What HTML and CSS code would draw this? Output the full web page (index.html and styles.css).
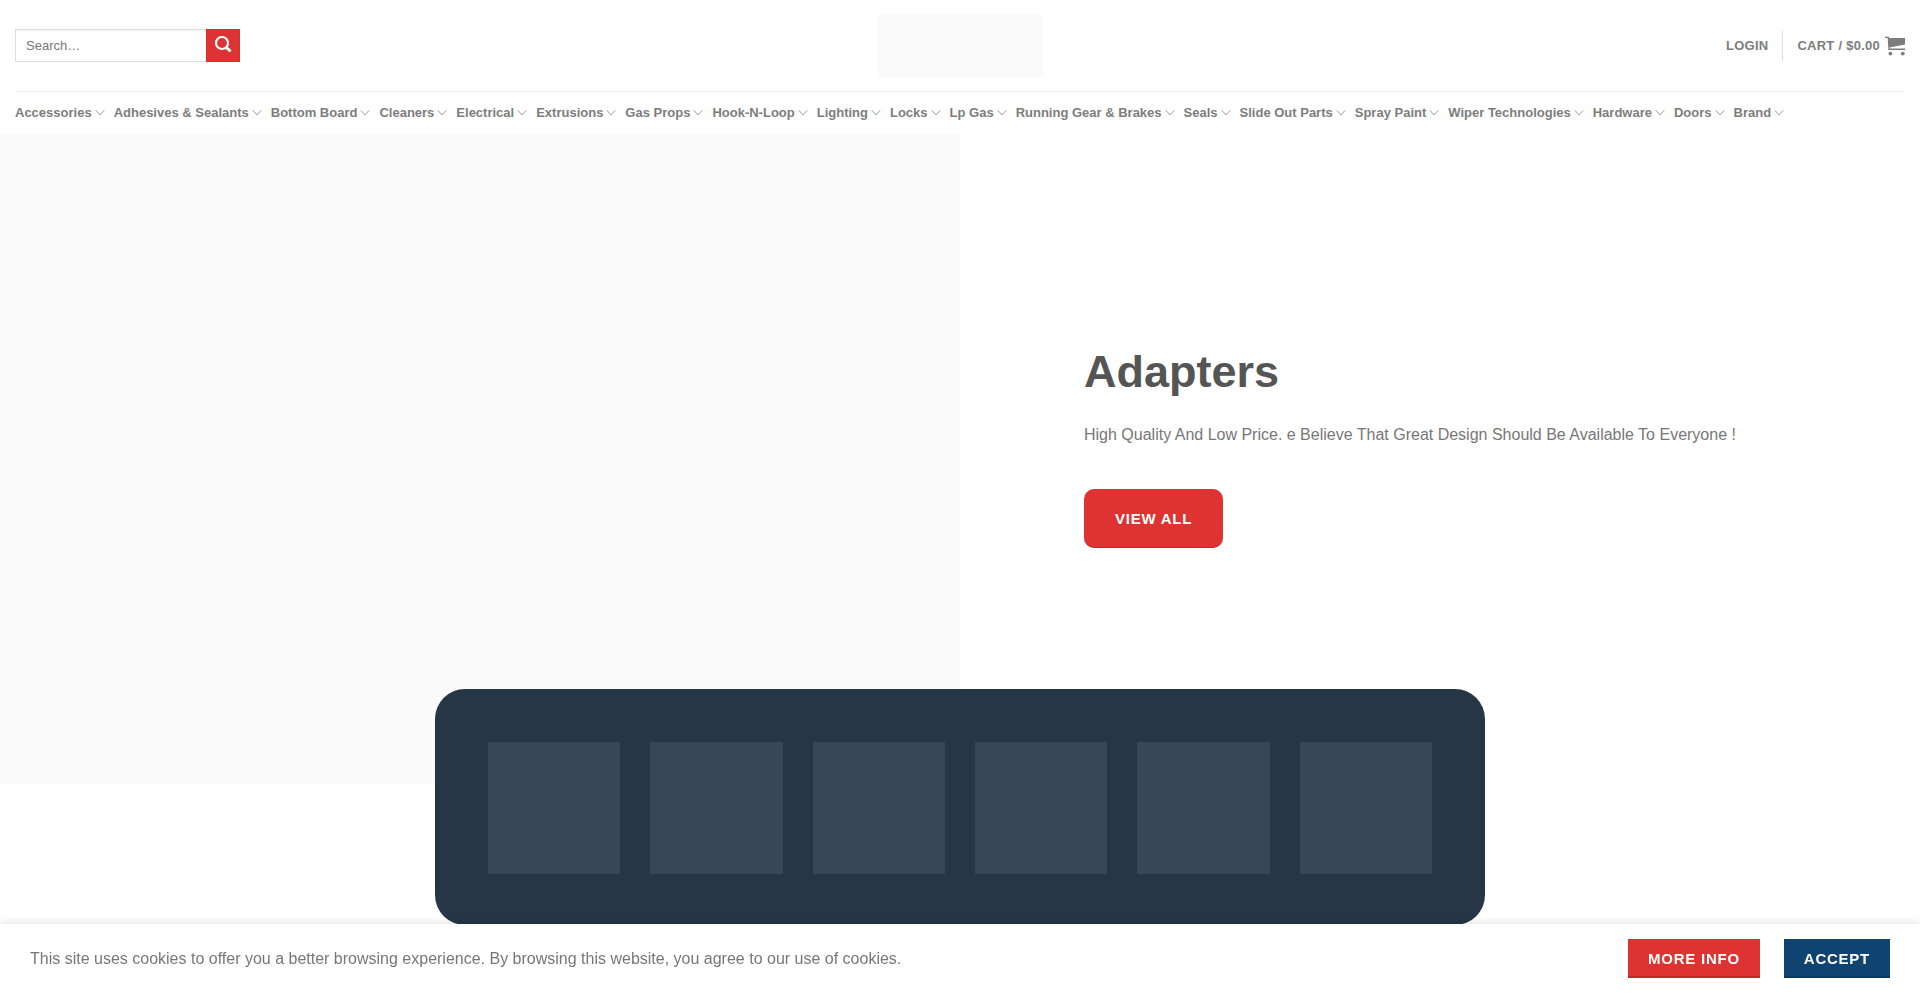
FILE: index.html
```html
<!DOCTYPE html>
<html lang="en">

<head>
    <meta charset="UTF-8">
    <meta name="viewport" content="width=device-width, initial-scale=1.0">
    <title>Adapters</title>
    <link rel="stylesheet" href="styles.css">
</head>

<body>
    <svg width="0" height="0" class="sprite" aria-hidden="true">
        <symbol id="chevron" viewBox="0 0 10 10">
            <path d="M0.8 2.3 L5 6.9 L9.2 2.3" fill="none" stroke="currentColor" stroke-width="1" />
        </symbol>
    </svg>

    <header class="header">
        <div class="header-main">
            <form class="search-form">
                <input type="search" class="search-field" placeholder="Search…" aria-label="Search">
                <button type="button" class="search-button" aria-label="Submit search">
                    <svg width="17" height="17" viewBox="0 0 17 17">
                        <circle cx="7" cy="7" r="6" fill="none" stroke="#fff" stroke-width="2.2" />
                        <path d="M11 11.2 L15.6 15.4" stroke="#fff" stroke-width="2.8" />
                    </svg>
                </button>
            </form>

            <a href="#" class="logo" aria-label="Home"></a>

            <div class="account">
                <a href="#" class="account-link">Login</a>
                <span class="divider"></span>
                <a href="#" class="account-link cart-link">
                    Cart / $0.00
                    <svg width="20" height="20" viewBox="0 0 20 20" fill="currentColor">
                        <path d="M0 0.8 H3.9 L4.3 2 H20 V8.6 L4.6 11.4 V12.6 H20 V14 H3.3 V11.4 L2.7 2 H0 Z" />
                        <circle cx="5.4" cy="17.6" r="1.9" />
                        <circle cx="17.8" cy="17.6" r="1.9" />
                    </svg>
                </a>
            </div>
        </div>

        <nav class="nav">
            <a href="#">Accessories <svg class="chevron"><use href="#chevron" /></svg></a>
            <a href="#">Adhesives &amp; Sealants <svg class="chevron"><use href="#chevron" /></svg></a>
            <a href="#">Bottom Board <svg class="chevron"><use href="#chevron" /></svg></a>
            <a href="#">Cleaners <svg class="chevron"><use href="#chevron" /></svg></a>
            <a href="#">Electrical <svg class="chevron"><use href="#chevron" /></svg></a>
            <a href="#">Extrusions <svg class="chevron"><use href="#chevron" /></svg></a>
            <a href="#">Gas Props <svg class="chevron"><use href="#chevron" /></svg></a>
            <a href="#">Hook-N-Loop <svg class="chevron"><use href="#chevron" /></svg></a>
            <a href="#">Lighting <svg class="chevron"><use href="#chevron" /></svg></a>
            <a href="#">Locks <svg class="chevron"><use href="#chevron" /></svg></a>
            <a href="#">Lp Gas <svg class="chevron"><use href="#chevron" /></svg></a>
            <a href="#">Running Gear &amp; Brakes <svg class="chevron"><use href="#chevron" /></svg></a>
            <a href="#">Seals <svg class="chevron"><use href="#chevron" /></svg></a>
            <a href="#">Slide Out Parts <svg class="chevron"><use href="#chevron" /></svg></a>
            <a href="#">Spray Paint <svg class="chevron"><use href="#chevron" /></svg></a>
            <a href="#">Wiper Technologies <svg class="chevron"><use href="#chevron" /></svg></a>
            <a href="#">Hardware <svg class="chevron"><use href="#chevron" /></svg></a>
            <a href="#">Doors <svg class="chevron"><use href="#chevron" /></svg></a>
            <a href="#">Brand <svg class="chevron"><use href="#chevron" /></svg></a>
        </nav>
    </header>

    <main>
        <section class="hero">
            <div class="hero-image"></div>
            <div class="hero-text">
                <h1>Adapters</h1>
                <p>High Quality And Low Price. e Believe That Great Design Should Be Available To Everyone !</p>
                <a href="#" class="button view-all">View all</a>
            </div>
        </section>

        <section class="brands">
            <div class="brand"></div>
            <div class="brand"></div>
            <div class="brand"></div>
            <div class="brand"></div>
            <div class="brand"></div>
            <div class="brand"></div>
        </section>
    </main>

    <div class="cookies">
        <p>This site uses cookies to offer you a better browsing experience. By browsing this website, you agree to our use of cookies.</p>
        <div class="cookies-buttons">
            <a href="#" class="button">More info</a>
            <button type="button" class="button accept">Accept</button>
        </div>
    </div>
</body>

</html>
```
FILE: styles.css
```css
* {
    box-sizing: border-box;
}

body {
    margin: 0;
    background-color: #fff;
    color: #777;
    font-family: "Liberation Sans", Arial, sans-serif;
    font-size: 16px;
    line-height: 26px;
    overflow: hidden;
}

a {
    color: inherit;
    text-decoration: none;
}

.sprite {
    position: absolute;
}

/* header */
.header {
    padding: 0 15px;
}

.header-main {
    display: grid;
    grid-template-columns: 1fr auto 1fr;
    align-items: center;
    height: 92px;
    border-bottom: 1px solid #ececec;
}

.search-form {
    display: flex;
    width: 225px;
}

.search-field {
    flex: 1;
    min-width: 0;
    height: 33px;
    margin: 0;
    padding: 0 10px;
    border: 1px solid #ddd;
    border-right: 0;
    border-radius: 0;
    box-shadow: inset 0 1px 2px rgba(0, 0, 0, 0.06);
    color: #333;
    font-family: inherit;
    font-size: 13px;
    outline: none;
}

.search-field::placeholder {
    color: #777;
}

.search-button {
    display: flex;
    justify-content: center;
    align-items: center;
    width: 34px;
    height: 33px;
    padding: 0 0 2px;
    border: 1px solid rgba(0, 0, 0, 0.05);
    background-color: #dd3333;
    cursor: pointer;
}

.logo {
    width: 165px;
    height: 63px;
    background-color: #fafafa;
}

.account {
    display: flex;
    justify-content: flex-end;
    align-items: center;
    gap: 14px;
}

.account-link {
    color: #7d7d7d;
    font-size: 13px;
    font-weight: bold;
    letter-spacing: 0.02em;
    text-transform: uppercase;
}

.cart-link {
    display: flex;
    align-items: center;
    gap: 5px;
}

.divider {
    height: 30px;
    border-left: 1px solid #ddd;
}

.nav {
    display: flex;
    align-items: center;
    gap: 9px;
    height: 42px;
    color: #7d7d7d;
    font-size: 13px;
    font-weight: bold;
    white-space: nowrap;
}

.nav a {
    display: flex;
    align-items: center;
    gap: 3px;
}

.chevron {
    width: 10px;
    height: 10px;
    color: #999;
}

/* hero */
.hero {
    display: grid;
    grid-template-columns: 1fr 1fr;
    height: 650px;
}

.hero-image {
    background-color: #fafafa;
}

.hero-text {
    display: flex;
    flex-direction: column;
    justify-content: center;
    align-items: flex-start;
    padding: 0 124px 28px;
}

.hero-text h1 {
    margin: 0 0 21px;
    color: #555;
    font-size: 45px;
    line-height: 58px;
}

.hero-text p {
    margin: 0 0 41px;
}

.button {
    padding: 0 20px;
    border: 0;
    background-color: #dd3333;
    box-shadow: inset 0 -2px 0 rgba(0, 0, 0, 0.15);
    color: #fff;
    font-family: inherit;
    font-size: 15px;
    font-weight: bold;
    letter-spacing: 0.05em;
    line-height: 39px;
    text-transform: uppercase;
    cursor: pointer;
}

.view-all {
    padding: 0 31px;
    border-radius: 10px;
    box-shadow: inset 0 -1px 0 rgba(0, 0, 0, 0.15);
    line-height: 59px;
}

/* brand tiles, pulled up over the hero */
.brands {
    position: relative;
    display: grid;
    grid-template-columns: repeat(6, 1fr);
    gap: 30px;
    max-width: 1050px;
    margin: -95px auto 0;
    padding: 53px 53px 51px;
    border-radius: 30px;
    background-color: #263646;
}

.brand {
    aspect-ratio: 1;
    background-color: #394656;
}

/* cookie notice */
.cookies {
    position: fixed;
    right: 0;
    bottom: 0;
    left: 0;
    display: flex;
    justify-content: space-between;
    align-items: center;
    padding: 15px 30px;
    background-color: #fff;
    box-shadow: 0 0 9px rgba(0, 0, 0, 0.14);
}

.cookies p {
    margin: 0;
}

.cookies-buttons {
    display: flex;
    gap: 24px;
}

.accept {
    background-color: #10436f;
}
```
